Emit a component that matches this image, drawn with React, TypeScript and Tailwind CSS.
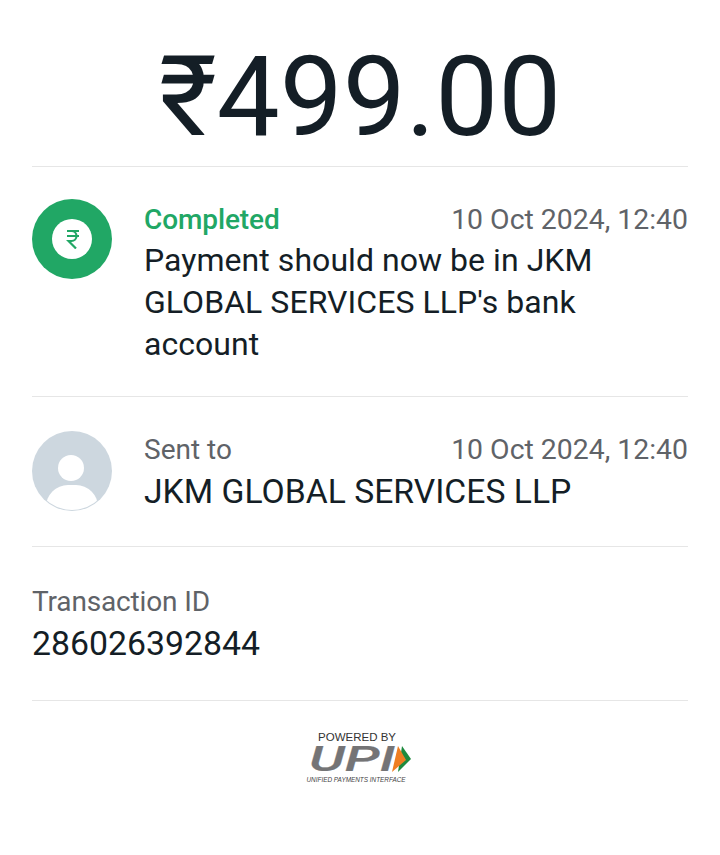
function RupeeBadge() {
  return (
    <div className="flex h-20 w-20 shrink-0 items-center justify-center rounded-full bg-[#21a765]">
      <div className="flex h-10 w-10 items-center justify-center rounded-full bg-white">
        <svg width="14" height="20" viewBox="0 0 14 20" fill="none" stroke="#21a765" strokeWidth="2.2" className="ml-0.5">
          <path d="M1 2h12M1 7h12M3 2h2.5a5 5 0 0 1 0 10H2.5l7.5 7.5" />
        </svg>
      </div>
    </div>
  );
}

function Avatar() {
  return (
    <div className="relative h-20 w-20 shrink-0 rounded-full bg-[#cdd7df]">
      <div className="absolute left-[26px] top-6 h-[26px] w-[26px] rounded-full bg-white" />
      <div className="absolute inset-[1px] overflow-hidden rounded-full">
        <div className="absolute left-[13px] top-[53px] h-[44px] w-[52px] rounded-full bg-white" />
      </div>
    </div>
  );
}

function UpiLogo() {
  return (
    <div className="flex w-[104px] flex-col items-center">
      <div className="-ml-1.5 -mt-px text-[11.5px] leading-[14px] text-[#333] [font-family:'Liberation_Sans',sans-serif]">POWERED BY</div>
      <svg width="104" height="29" viewBox="0 0 104 29" className="overflow-visible">
        <text
          x="1"
          y="27"
          textLength="86"
          lengthAdjust="spacingAndGlyphs"
          fontSize="35"
          fontWeight="500"
          fontStyle="italic"
          fill="#747476"
          stroke="#747476"
          strokeWidth="0.2"
          fontFamily="Roboto, sans-serif"
        >
          UPI
        </text>
        <polygon points="94,2 103,15 90,28" fill="#1d8a3e" />
        <polygon points="90,2 98,16 84,28" fill="#ee7e22" />
      </svg>
      <div className="-ml-2 mt-[3px] text-[6.4px] italic leading-[8px] text-[#444] [font-family:'Liberation_Sans',sans-serif]">UNIFIED PAYMENTS INTERFACE</div>
    </div>
  );
}

export default function App() {
  return (
    <div className="min-h-[855px] bg-white px-8 text-[#141e26] [font-family:Roboto,sans-serif]">
      <div className="flex h-[167px] items-start justify-center border-b border-[#e6e6e6] pt-[31px]">
        <div className="text-[112px] leading-[131px]">₹499.00</div>
      </div>

      <div className="flex h-[230px] gap-8 border-b border-[#e6e6e6] pt-8">
        <RupeeBadge />
        <div className="min-w-0 flex-1">
          <div className="flex items-center justify-between pt-px text-[28px] leading-10">
            <span className="font-medium tracking-[-0.1px] text-[#21a765]">Completed</span>
            <span className="text-[28.4px] text-[#5f6368]">10 Oct 2024, 12:40</span>
          </div>
          <div className="-mt-px text-[32px] leading-[42px] tracking-[0.05px]">
            Payment should now be in JKM GLOBAL SERVICES LLP's bank account
          </div>
        </div>
      </div>

      <div className="flex h-[150px] gap-8 border-b border-[#e6e6e6] pt-[34px]">
        <Avatar />
        <div className="-mt-px min-w-0 flex-1">
          <div className="flex items-center justify-between text-[28px] leading-10">
            <span className="text-[#5f6368]">Sent to</span>
            <span className="text-[28.4px] text-[#5f6368]">10 Oct 2024, 12:40</span>
          </div>
          <div className="pt-px text-[33.7px] leading-[42px]">JKM GLOBAL SERVICES LLP</div>
        </div>
      </div>

      <div className="h-[154px] border-b border-[#e6e6e6] pt-[35px]">
        <div className="text-[28px] leading-10 tracking-[-0.15px] text-[#5f6368]">Transaction ID</div>
        <div className="pt-px text-[33.8px] leading-[42px]">286026392844</div>
      </div>

      <div className="flex justify-center pt-[30px]">
        <UpiLogo />
      </div>
    </div>
  );
}
